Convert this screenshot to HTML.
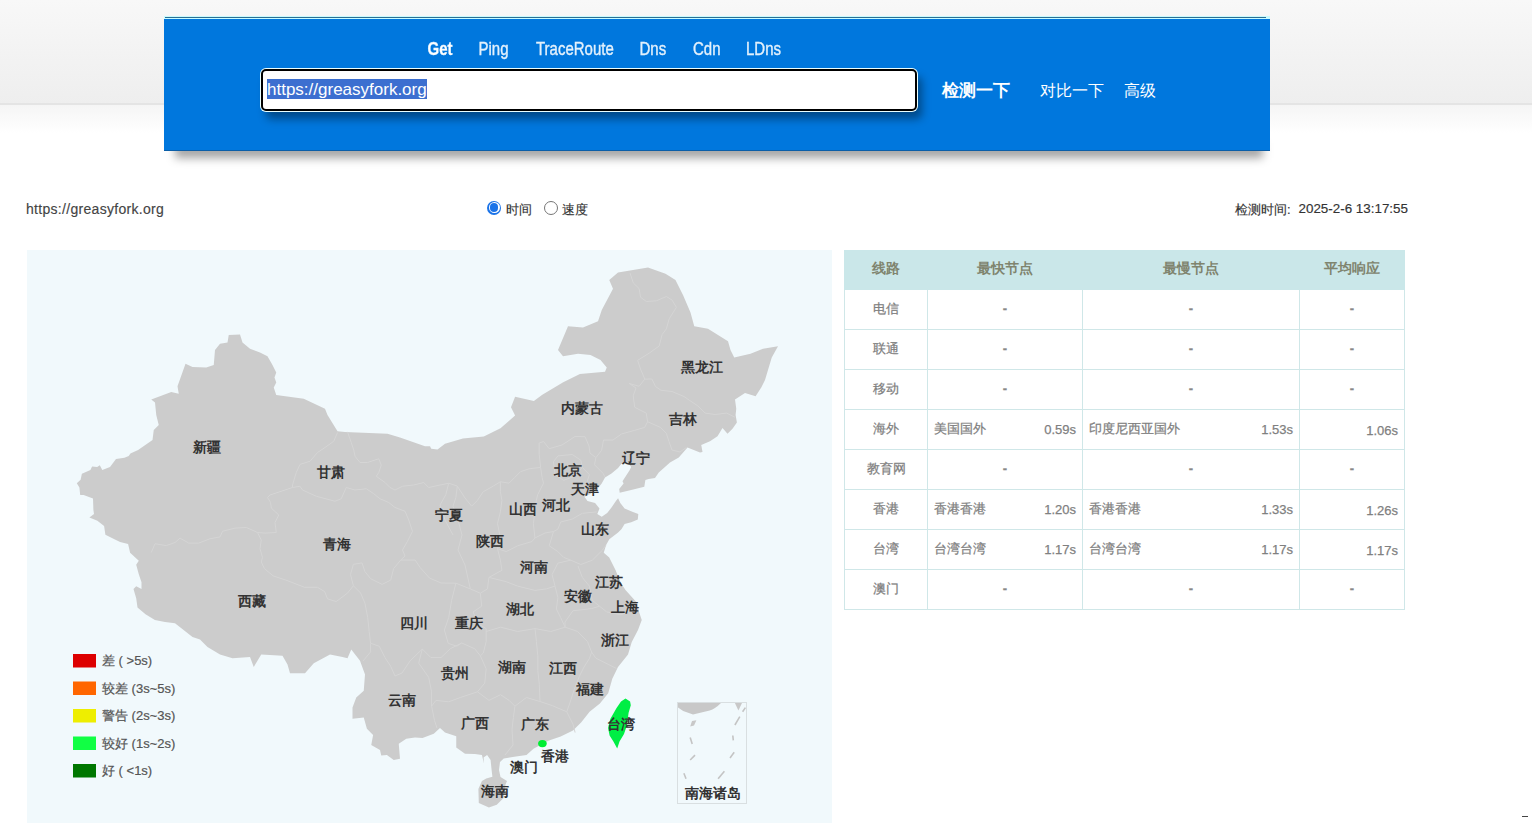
<!DOCTYPE html>
<html><head><meta charset="utf-8">
<style>
*{margin:0;padding:0;box-sizing:border-box}
html,body{width:1532px;height:823px;overflow:hidden;background:#fff;font-family:"Liberation Sans",sans-serif}
.topbg{position:absolute;left:0;top:0;width:1532px;height:104px;background:linear-gradient(#f8f8f8,#eeeeee)}
.topline{position:absolute;left:0;top:103px;width:1532px;height:2px;background:#e4e4e4}
.topfade{position:absolute;left:0;top:105px;width:1532px;height:28px;background:linear-gradient(#f5f5f5,#fff)}
.hdr{position:absolute;left:164px;top:19px;width:1106px;height:132px;background:#0077dd;border-bottom:1px solid #0a5ea8}
.hdrtl{position:absolute;left:164px;top:16px;width:1106px;height:3px;background:#c8fbff}
.hdrdark{position:absolute;left:165px;top:17px;width:1101px;height:1px;background:#2d6e93}
.hshadow{position:absolute;left:175px;top:143px;width:1088px;height:15px;background:rgba(0,0,0,.36);filter:blur(5px)}
.t{position:absolute;white-space:nowrap}
.nav{color:#e3f1fc;font-size:15px;top:39px;-webkit-text-stroke:0.3px #e3f1fc;transform:scaleY(1.18);transform-origin:0 4px}
.inp{position:absolute;left:261px;top:69px;width:656px;height:42px;border:2px solid #000;border-radius:5px;background:#fff;box-shadow:0 0 0 1px #eaffff, 5px 8px 8px rgba(0,0,0,.38)}
.sel{position:absolute;left:267px;top:79px;width:160px;height:20px;background:#3c6fd0}
.seltxt{position:absolute;left:267px;top:80px;font-size:17px;line-height:20px;color:#fff}
.btn{color:#fff;font-size:16px;top:81px}
.row{font-size:13px;color:#333;top:201px;-webkit-text-stroke:0.15px currentColor}
.mapbg{position:absolute;left:27px;top:250px;width:805px;height:573px;background:#f1f9fc}
table{position:absolute;left:844px;top:250px;border-collapse:collapse;font-size:13px;color:#808080}
td,th{border:1px solid #cfe7e8;height:40px;padding:0 6px}
td{padding-bottom:2px;-webkit-text-stroke:0.25px #808080}
.d{font-weight:bold;color:#888}
th{background:#cae7e9;color:#7f846e;font-weight:bold;font-size:13.5px;border-color:#cae7e9;height:39px;padding-bottom:2px}
td.c{text-align:center}
.r{float:right;position:relative;top:2px}
.leg{position:absolute;font-size:13px;line-height:15px;color:#555;white-space:nowrap;-webkit-text-stroke:0.2px #555}
.radio{position:absolute;width:14px;height:14px;border-radius:50%}
.lbl{position:absolute;font-size:14px;line-height:13px;font-weight:700;color:#333;white-space:nowrap}
</style></head><body>
<div class="topbg"></div><div class="topline"></div><div class="topfade"></div>
<div class="hshadow"></div><div class="hdrtl"></div><div class="hdrdark"></div>
<div class="hdr"></div>
<div class="t nav" style="left:427.5px;color:#fff;font-weight:bold">Get</div>
<div class="t nav" style="left:478.5px">Ping</div>
<div class="t nav" style="left:536px">TraceRoute</div>
<div class="t nav" style="left:639.5px">Dns</div>
<div class="t nav" style="left:693px">Cdn</div>
<div class="t nav" style="left:746px">LDns</div>
<div class="inp"></div>
<div class="sel"></div>
<div class="t seltxt">https://greasyfork.org</div>
<div class="t btn" style="left:942px;font-weight:bold;font-size:17px;top:79px">检测一下</div>
<div class="t btn" style="left:1040px">对比一下</div>
<div class="t btn" style="left:1124px">高级</div>

<div class="t row" style="left:26px;font-size:14px;letter-spacing:0.3px;top:201px;color:#444">https://greasyfork.org</div>
<div class="radio" style="left:487px;top:200.5px;background:#1a73e8"></div><div class="radio" style="left:488.5px;top:202px;width:11px;height:11px;background:#fff"></div><div class="radio" style="left:489.8px;top:203.3px;width:8.4px;height:8.4px;background:#1a73e8"></div>
<div class="t row" style="left:506px">时间</div>
<div class="radio" style="left:543.5px;top:200.5px;border:1px solid #767676;background:#fff"></div>
<div class="t row" style="left:562px">速度</div>
<div class="t row" style="left:1235px">检测时间:</div><div class="t row" style="left:1298.5px;font-size:13.4px;top:200.5px">2025-2-6 13:17:55</div>

<div class="mapbg"></div>
<svg style="position:absolute;left:0;top:0" width="1532" height="823">
<path d="M151.25,399.5 L171.25,392 L178.75,393.75 L177.5,386.25 L185.5,363.75 L192.5,367 L206.25,367.5 L213.75,365 L215,350 L220,343.75 L227.5,342.5 L228.75,335 L240,334.5 L242.5,342.5 L250,348.75 L260,352.5 L267.5,356.25 L272.5,365 L276.25,372.5 L274.5,377.5 L276.25,382.5 L273.75,387.5 L276.25,395 L303.75,398.75 L325,408.75 L327.5,415 L337.5,431.25 L345,432 L387.5,433.75 L400,437.5 L425,446.25 L430,446.25 L431.25,448.75 L437.5,449.5 L445,443.75 L462.9,438.6 L483.8,436.5 L500.5,428.2 L515.1,415.6 L511,407.3 L515.1,396.8 L533.9,401 L542.3,394.8 L563.2,382.2 L579.9,373.9 L605,371.8 L606.75,367.5 L600.5,360 L590.5,355 L578,353.75 L563,356.25 L558,350 L568,326.25 L583,327.5 L598,321.25 L601.75,310 L613,288.75 L609.25,280 L618,272.5 L648,267.5 L665.5,273.75 L675.5,280 L683,295 L690.5,312.5 L694.25,326.25 L708,328.75 L728,341.25 L730.5,350 L734.25,357.5 L750.5,353.75 L763,348.75 L778,346.25 L771.75,357.5 L768,370 L765,380 L761.25,387.5 L755.6,396.25 L745,393.1 L735,399.4 L736.25,408.75 L735.6,415 L736.9,422.5 L732.5,428.75 L727.5,433.75 L722.5,428.1 L717.5,436.25 L710,441.25 L701.25,445 L702.5,451.9 L700,452.5 L687.5,447.5 L678.75,457.5 L670,462.5 L658.75,472.5 L655,478.1 L648.7,479 L645.4,480.1 L644.3,486.7 L631.2,490 L619.7,492.7 L619.2,488.9 L623.6,483.4 L622.5,481.2 L629.6,470.3 L631.2,467 L629,464.3 L621.4,463.7 L618.1,468.1 L611.5,473.6 L605,477.4 L601.7,483.4 L597.3,488.9 L589.7,494.3 L584.2,496.5 L587.5,500.9 L595.1,503.1 L599.5,508.6 L597.3,514 L601.7,516.7 L607.2,512.9 L611.5,507.5 L615.9,500.9 L618.1,498.2 L620.3,503.1 L624.6,508.6 L632.3,511.8 L638.3,514 L637.8,519.5 L631.2,522.2 L624.6,523.9 L621.4,529.3 L618.1,532.6 L609.3,539.2 L606.1,545 L603.75,552.75 L609.25,557.5 L615.5,570 L620.5,582.5 L625.5,590 L636.75,602.5 L639.25,612.5 L641.75,620 L638,630 L631.75,642 L628,654.5 L618,667 L612.3,678.8 L608.2,693.3 L599.9,703.6 L589.6,711.8 L581.3,722.2 L573,730.4 L560.7,736.6 L548.3,740.8 L533.5,748.75 L526.5,754.9 L516,756.6 L503.75,758.4 L500,762 L499,770 L500.5,777 L507,781 L505.5,784.6 L503.75,797.75 L496.75,804.75 L488.9,807.4 L478.8,803 L478.4,789 L481.9,781.1 L486.25,778.5 L492.4,776.75 L491.5,768.9 L490.6,760.1 L487.1,754.9 L483.6,757.5 L484,763.6 L481.9,754.9 L474.9,754 L465,753.75 L456.25,747.5 L456.25,736.25 L445,732.5 L440,728.1 L433.75,733.75 L422.5,738.1 L415,737.5 L406.25,738.75 L398.75,743.75 L400,758.75 L393.75,760 L386.9,755 L381.25,755.6 L380,750 L371.25,745 L373.1,735 L366.9,728.75 L363.75,717.5 L352.5,718.75 L352.5,707.5 L356.25,697.5 L363.75,690.75 L365,674.5 L360,660.75 L351.25,649.5 L347.5,658.25 L342.5,657 L330,654.5 L313.75,663.25 L305,673.25 L290,673.25 L287.5,664.5 L282.5,655.75 L261.25,654.5 L253.75,667 L250,657 L232.5,658.25 L220,654.5 L207.5,647 L200,639.5 L192.5,637 L175,623.25 L165,622 L154.9,620 L145.5,614.3 L137.5,607.6 L136.2,598.3 L133.5,588.9 L136.2,586.2 L141.5,588.9 L141.5,582.2 L138.8,574.2 L136.2,564.8 L138.8,560.8 L130.1,552.8 L128.1,544.1 L120.1,542.1 L113.4,538.8 L105.4,534.7 L104.1,526 L97.4,520.7 L89.4,517.4 L94,514 L93.4,510 L93,498.5 L83.6,495.1 L80.2,495.1 L79.4,487.4 L76.8,483.2 L80.6,479.8 L81.9,473.8 L90.4,470 L92.1,466.6 L97.2,467 L99.8,465.3 L102.3,470 L110,467 L116,458.9 L124.5,457.7 L128.7,456 L130.4,453.4 L138.1,450 L152.5,440 L153.75,430 L158.75,425 L156.25,415 L155,402.5Z" fill="#cccccc"/>
<path d="M337.5,432.5 L333.75,441.25 L325,447.5 L317.5,452.5 L310,461.25 L300,464.4 L296.25,472.5 L292.5,485 L292.5,487.5" fill="none" stroke="#d5d5d5" stroke-width="1" stroke-linejoin="round"/><path d="M292.5,487.5 L270,495 L267.5,497.5 L270.6,502.5 L271.25,508 L278.75,515 L275,522.5 L276.25,532.5" fill="none" stroke="#d5d5d5" stroke-width="1" stroke-linejoin="round"/><path d="M151.25,552.5 L155,543.75 L166.25,545.6 L175,542.5 L180,538.1 L188.75,543.1 L198.75,543.1 L210,538.75 L220,536.9 L222.5,531.25 L235,528.1 L246.25,527.5 L257.5,532.5 L265,533.1 L276.25,532.5" fill="none" stroke="#d5d5d5" stroke-width="1" stroke-linejoin="round"/><path d="M257.5,532.5 L261.25,540 L260,548.75 L262.5,557.5 L261.25,562 L264.4,568.6 L273,575.8 L285.9,580.1 L304.6,587.3 L317.5,587.3 L324.7,591.6 L327.5,598.8 L336.2,601.6 L347.6,593 L353.4,585.8" fill="none" stroke="#d5d5d5" stroke-width="1" stroke-linejoin="round"/><path d="M292.5,487.5 L300,486.25 L302.5,490 L316.25,496.25 L335,501.25 L341.25,498.75 L346.25,487.5 L355,490 L366.25,488.75 L373.75,493.75 L380,498.75 L388.75,502.5 L395,507.5 L405,511.25 L408.75,520 L412.5,531.25 L407.5,541.25 L402.5,550 L405,556 L400.8,560" fill="none" stroke="#d5d5d5" stroke-width="1" stroke-linejoin="round"/><path d="M400.8,560 L393.6,568.6 L390.7,580.1 L382.1,584.4 L370.6,578.7 L364.9,571.5 L362,562.9 L353.4,564.3 L350.5,574.4 L353.4,585.8" fill="none" stroke="#d5d5d5" stroke-width="1" stroke-linejoin="round"/><path d="M353.4,585.8 L360.6,593 L364.9,603.1 L367.7,617.4 L369.2,631.8 L370.6,643.3 L370.6,651.9 L363,661" fill="none" stroke="#d5d5d5" stroke-width="1" stroke-linejoin="round"/><path d="M370.6,643.3 L379.2,646.2 L385,657.6 L390.7,666.3 L395,676 L402,673 L410,661 L422.3,649" fill="none" stroke="#d5d5d5" stroke-width="1" stroke-linejoin="round"/><path d="M400.8,560 L415.1,560 L420,567.4 L429.5,578 L441,583 L455.9,583.2 L470.3,588.9 L480.3,593.2 L487.5,588.9 L488.9,577.4" fill="none" stroke="#d5d5d5" stroke-width="1" stroke-linejoin="round"/><path d="M347.5,431.9 L351.25,442.5 L353.75,450 L355,456.25 L360,462.5 L367.5,462.5 L378.75,458.75 L381.25,465 L378.75,472.5 L376.25,476.25 L385,482.5 L390,487.5 L395,490 L402.5,486.25 L413.75,485 L423.75,482.5 L428.6,487.5 L448.7,483.2 L457.3,486.1 L465,498 L471.7,506.2 L477.4,500.4 L483.2,491.8 L493.2,486.1 L500.4,481.7 L509,483.2 L514.8,477.4 L520.5,471.7 L529.1,468.8 L540.6,467.4" fill="none" stroke="#d5d5d5" stroke-width="1" stroke-linejoin="round"/><path d="M448.7,483.2 L445.8,494.7 L440,505 L445,520 L453,535" fill="none" stroke="#d5d5d5" stroke-width="1" stroke-linejoin="round"/><path d="M457.3,486.1 L455.9,497.5 L453,506.2 L458,520 L462,535 L458,550 L465,565 L470.3,588.9" fill="none" stroke="#d5d5d5" stroke-width="1" stroke-linejoin="round"/><path d="M500.4,481.7 L500.4,491.8 L501.9,500.4 L500.4,511.9 L497.5,523.4 L500.4,538 L497.5,548.7 L500.4,560.2 L501.9,570.3 L488.9,577.4" fill="none" stroke="#d5d5d5" stroke-width="1" stroke-linejoin="round"/><path d="M539.2,443 L539.2,454.5 L540.6,467.4 L542.1,477.4 L543.5,483.2 L537.7,494.7 L536.3,500.4 L534.9,511.9 L533.4,523.4 L534.9,538" fill="none" stroke="#d5d5d5" stroke-width="1" stroke-linejoin="round"/><path d="M497.5,548.7 L506.2,551.6 L517.6,545.8 L532,541.5 L534.9,538 L545,533 L553.5,531.5" fill="none" stroke="#d5d5d5" stroke-width="1" stroke-linejoin="round"/><path d="M596.6,511.9 L582.3,513.3 L572.2,519.1 L560.7,522 L557.9,529.1 L553.5,531.5 L549.2,545.8 L557.9,551.6 L563.6,557.3 L570.8,560.2 L580.8,564.5 L592.3,560.2 L602.4,550.2 L606,545" fill="none" stroke="#d5d5d5" stroke-width="1" stroke-linejoin="round"/><path d="M539.2,443 L543.5,441.5 L549.2,448.7 L562,445 L575,436.5 L585,436.7 L589,446 L590,453 L595.9,457.6 L601.6,450.4 L603.5,440 L613,440 L621.5,434 L634.7,430.3 L644.7,427.4 L647.6,421.7" fill="none" stroke="#d5d5d5" stroke-width="1" stroke-linejoin="round"/><path d="M595.9,457.6 L594.5,464.8 L603.1,473.4 L605,477" fill="none" stroke="#d5d5d5" stroke-width="1" stroke-linejoin="round"/><path d="M647.6,421.7 L646.2,413.1 L634.7,407.3 L633.2,395.8 L636,388 L629,383.4 L639.1,386.3 L644.8,379.1 L640.5,369 L637.6,360.4 L649.1,353.2 L659.2,346 L662.1,334.6 L666.4,328.8 L669.2,318.8 L676.4,307.3 L672.1,300.1 L666.4,296.5 L656.3,300.8 L646.3,301.5 L640.5,297.2 L639.1,288.6 L633.3,282.9 L630,273" fill="none" stroke="#d5d5d5" stroke-width="1" stroke-linejoin="round"/><path d="M644.8,379.1 L651.9,379 L655.5,386.5 L661,390.3 L672,391.5 L684,396.5 L689.2,400.2 L697.9,405.9 L705,413.1 L715.1,414.5 L726.6,413.1 L735.2,417.4" fill="none" stroke="#d5d5d5" stroke-width="1" stroke-linejoin="round"/><path d="M647.6,421.7 L660.5,427.4 L666.3,433.2 L669.1,441.8 L672,450 L680,452 L686.4,447.5" fill="none" stroke="#d5d5d5" stroke-width="1" stroke-linejoin="round"/><path d="M557.9,455.9 L572.2,454.5 L580.8,460.2 L582.3,467.4 L575.1,476 L563.6,480.3 L555,474.6 L553.5,461.6 L557.9,455.9" fill="none" stroke="#d5d5d5" stroke-width="1" stroke-linejoin="round"/><path d="M582.3,467.4 L589.4,474.6 L586.6,483.2 L583.7,491.8 L585,497" fill="none" stroke="#d5d5d5" stroke-width="1" stroke-linejoin="round"/><path d="M570.8,560.2 L557.9,563.1 L552.1,574.6 L555,586.1 L557.9,597.5 L556.4,609 L560.7,617.6 L565.1,627.2 L577.2,631.3 L587.5,641.6 L591.6,652 L595.8,658.2 L608.2,664.3 L616.4,668.5" fill="none" stroke="#d5d5d5" stroke-width="1" stroke-linejoin="round"/><path d="M578,566 L582.3,577.4 L589.4,586.1 L592.3,600.4 L599.5,606.2 L606.7,611.9 L621,614.8 L630,611" fill="none" stroke="#d5d5d5" stroke-width="1" stroke-linejoin="round"/><path d="M599.5,606.2 L591.6,608.6 L573,610.7 L565,622 L565.1,627.2" fill="none" stroke="#d5d5d5" stroke-width="1" stroke-linejoin="round"/><path d="M488.9,577.4 L506.2,581.7 L517.6,586.1 L534.9,590.4 L546.4,588.9 L555,586.1" fill="none" stroke="#d5d5d5" stroke-width="1" stroke-linejoin="round"/><path d="M451.6,600.4 L448.7,617.6 L444.4,630 L448.2,643.3 L456.8,646.2 L461.7,643 L474.7,648.7 L480.4,655.9 L483.3,653 L486.2,641.5 L486.2,628.6 L477.4,623.4 L473.1,611.9 L481.7,606.2 L480.3,593.2" fill="none" stroke="#d5d5d5" stroke-width="1" stroke-linejoin="round"/><path d="M455.9,583.2 L451.6,600.4" fill="none" stroke="#d5d5d5" stroke-width="1" stroke-linejoin="round"/><path d="M486.2,631.5 L500.5,627.2 L517.7,631.5 L535,628.6 L550.8,631.5 L565.1,627.2" fill="none" stroke="#d5d5d5" stroke-width="1" stroke-linejoin="round"/><path d="M535,628.6 L536.4,641.5 L537.8,655.9 L537.8,670.3 L539.3,684.6 L540,701.5" fill="none" stroke="#d5d5d5" stroke-width="1" stroke-linejoin="round"/><path d="M591.6,652 L589.6,658.2 L584,667 L579.2,676.7 L574,690 L571,699.5 L566.8,711.8 L573,724.2 L575.1,732.5" fill="none" stroke="#d5d5d5" stroke-width="1" stroke-linejoin="round"/><path d="M422.3,649 L430.9,657.6 L441,657.6 L450.3,648.7 L461.7,643" fill="none" stroke="#d5d5d5" stroke-width="1" stroke-linejoin="round"/><path d="M480.4,655.9 L486.2,668.8 L484.7,683.2 L477.5,691.8 L460.3,697.5 L448.8,701.8 L435.9,700.4 L431.6,706.2" fill="none" stroke="#d5d5d5" stroke-width="1" stroke-linejoin="round"/><path d="M422.3,649 L418.7,663.1 L428.7,677.4 L431.6,691.8 L431.6,706.2 L434.5,720.5 L437,728" fill="none" stroke="#d5d5d5" stroke-width="1" stroke-linejoin="round"/><path d="M477.5,691.8 L489,700.4 L500.5,694.7 L509.1,700.4 L514.9,706.2 L526.4,697.5 L540,701.5 L552.4,705.7 L566.8,711.8" fill="none" stroke="#d5d5d5" stroke-width="1" stroke-linejoin="round"/><path d="M514.9,706.2 L513.4,717.6 L512,729.1 L513,745 L505,755" fill="none" stroke="#d5d5d5" stroke-width="1" stroke-linejoin="round"/>
<path d="M625.5,698.4 L630.1,701.4 L630.8,705.2 L628.6,712.8 L627,724.9 L624,734 L619.5,741.6 L617.2,748.5 L613.4,741.6 L609.6,735.6 L608.1,728 L610.3,718.9 L616.4,708.2 L621,701.4Z" fill="#00ee44"/>
<ellipse cx="542.4" cy="743.6" rx="4.3" ry="3.6" fill="#00ee33"/>
<rect x="677.5" y="702.5" width="69" height="101" fill="none" stroke="#d9dfe1" stroke-width="1"/>
<path d="M678,703 L721,703 Q715,709 709.7,710.4 L693,714.6 L683.2,711.1 L678,707.6Z" fill="#c8c8c8"/>
<path d="M734.9,703 L742,703 L738.4,710.4Z" fill="#c8c8c8"/>
<path d="M690.2,726.4 L692,721 L696.4,720.2 L694,725.5Z" fill="#c8c8c8"/>
<line x1="690.2" y1="737.6" x2="692.2" y2="743.9" stroke="#c4c4c4" stroke-width="1.6"/>
<line x1="690.2" y1="760" x2="695" y2="755.1" stroke="#c4c4c4" stroke-width="1.6"/>
<line x1="683.9" y1="773.3" x2="686" y2="778.8" stroke="#c4c4c4" stroke-width="1.6"/>
<line x1="718.1" y1="778.8" x2="724.4" y2="771.2" stroke="#c4c4c4" stroke-width="1.6"/>
<line x1="730" y1="757.9" x2="734.2" y2="752.3" stroke="#c4c4c4" stroke-width="1.6"/>
<line x1="732.8" y1="735.5" x2="733.3" y2="740.4" stroke="#c4c4c4" stroke-width="1.6"/>
<line x1="734.9" y1="725" x2="739.8" y2="716.7" stroke="#c4c4c4" stroke-width="1.6"/>
<line x1="742.6" y1="711.8" x2="745.4" y2="707.6" stroke="#c4c4c4" stroke-width="1.6"/>
<rect x="73" y="654.0" width="23" height="13.5" fill="#dd0000"/>
<rect x="73" y="681.5" width="23" height="13.5" fill="#ff6600"/>
<rect x="73" y="709.0" width="23" height="13.5" fill="#eeee00"/>
<rect x="73" y="736.5" width="23" height="13.5" fill="#11ff44"/>
<rect x="73" y="764.0" width="23" height="13.5" fill="#007700"/>
</svg>
<div class="leg" style="left:102px;top:653px">差 ( &gt;5s)</div>
<div class="leg" style="left:102px;top:680.5px">较差 (3s~5s)</div>
<div class="leg" style="left:102px;top:708px">警告 (2s~3s)</div>
<div class="leg" style="left:102px;top:735.5px">较好 (1s~2s)</div>
<div class="leg" style="left:102px;top:763px">好 ( &lt;1s)</div>
<div class="lbl" style="left:684.5px;top:787px">南海诸岛</div>
<div class="lbl" style="left:193.25px;top:441.25px">新疆</div>
<div class="lbl" style="left:317px;top:465.75px">甘肃</div>
<div class="lbl" style="left:560.5px;top:402px">内蒙古</div>
<div class="lbl" style="left:681px;top:361.25px">黑龙江</div>
<div class="lbl" style="left:669.25px;top:413px">吉林</div>
<div class="lbl" style="left:621.75px;top:452px">辽宁</div>
<div class="lbl" style="left:554.25px;top:463.75px">北京</div>
<div class="lbl" style="left:571px;top:483px">天津</div>
<div class="lbl" style="left:542.25px;top:498.75px">河北</div>
<div class="lbl" style="left:508.5px;top:503px">山西</div>
<div class="lbl" style="left:435px;top:509px">宁夏</div>
<div class="lbl" style="left:323.25px;top:538.25px">青海</div>
<div class="lbl" style="left:476px;top:534.5px">陕西</div>
<div class="lbl" style="left:581px;top:523px">山东</div>
<div class="lbl" style="left:520px;top:560.75px">河南</div>
<div class="lbl" style="left:595px;top:576.25px">江苏</div>
<div class="lbl" style="left:563.5px;top:589.5px">安徽</div>
<div class="lbl" style="left:611.25px;top:600.75px">上海</div>
<div class="lbl" style="left:238px;top:595px">西藏</div>
<div class="lbl" style="left:400px;top:617px">四川</div>
<div class="lbl" style="left:455px;top:617px">重庆</div>
<div class="lbl" style="left:506px;top:603px">湖北</div>
<div class="lbl" style="left:600.5px;top:633.75px">浙江</div>
<div class="lbl" style="left:441px;top:667px">贵州</div>
<div class="lbl" style="left:498px;top:660.75px">湖南</div>
<div class="lbl" style="left:549.25px;top:662px">江西</div>
<div class="lbl" style="left:575.5px;top:682.5px">福建</div>
<div class="lbl" style="left:387.5px;top:693.5px">云南</div>
<div class="lbl" style="left:461.25px;top:717px">广西</div>
<div class="lbl" style="left:521px;top:717.75px">广东</div>
<div class="lbl" style="left:606.75px;top:718.25px">台湾</div>
<div class="lbl" style="left:541px;top:749.5px">香港</div>
<div class="lbl" style="left:510.25px;top:760.75px">澳门</div>
<div class="lbl" style="left:480.5px;top:784.5px">海南</div>

<table>
<tr><th style="width:83px">线路</th><th style="width:155px">最快节点</th><th style="width:217px">最慢节点</th><th style="width:105px">平均响应</th></tr>
<tr><td class="c">电信</td><td class="c"><span class="d">-</span></td><td class="c"><span class="d">-</span></td><td class="c"><span class="d">-</span></td></tr>
<tr><td class="c">联通</td><td class="c"><span class="d">-</span></td><td class="c"><span class="d">-</span></td><td class="c"><span class="d">-</span></td></tr>
<tr><td class="c">移动</td><td class="c"><span class="d">-</span></td><td class="c"><span class="d">-</span></td><td class="c"><span class="d">-</span></td></tr>
<tr><td class="c">海外</td><td>美国国外<span class="r">0.59s</span></td><td>印度尼西亚国外<span class="r">1.53s</span></td><td><span class="r">1.06s</span></td></tr>
<tr><td class="c">教育网</td><td class="c"><span class="d">-</span></td><td class="c"><span class="d">-</span></td><td class="c"><span class="d">-</span></td></tr>
<tr><td class="c">香港</td><td>香港香港<span class="r">1.20s</span></td><td>香港香港<span class="r">1.33s</span></td><td><span class="r">1.26s</span></td></tr>
<tr><td class="c">台湾</td><td>台湾台湾<span class="r">1.17s</span></td><td>台湾台湾<span class="r">1.17s</span></td><td><span class="r">1.17s</span></td></tr>
<tr><td class="c">澳门</td><td class="c"><span class="d">-</span></td><td class="c"><span class="d">-</span></td><td class="c"><span class="d">-</span></td></tr>
</table>
<div style="position:absolute;left:1522px;top:816px;width:6px;height:1px;background:#444"></div>
</body></html>
